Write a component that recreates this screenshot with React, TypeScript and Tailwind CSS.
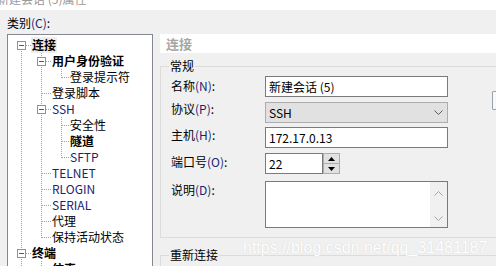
import React from "react";

type Kind = "pipe" | "tee" | "corner" | "first";

const DOT = "#a0a0a0";

function TreeCell({ kind, box }: { kind: Kind; box?: boolean }) {
  return (
    <svg width="20" height="16" className="block shrink-0">
      {(kind === "pipe" || kind === "tee") && (
        <line x1="10.5" y1="0" x2="10.5" y2="16" stroke={DOT} strokeDasharray="1 1" />
      )}
      {kind === "corner" && (
        <line x1="10.5" y1="0" x2="10.5" y2="9" stroke={DOT} strokeDasharray="1 1" />
      )}
      {kind === "first" && (
        <line x1="10.5" y1="8" x2="10.5" y2="16" stroke={DOT} strokeDasharray="1 1" />
      )}
      {kind !== "pipe" && (
        <line x1="11" y1="8.5" x2="20" y2="8.5" stroke={DOT} strokeDasharray="1 1" />
      )}
      {box && (
        <>
          <rect x="6.5" y="4.5" width="8" height="8" fill="#ffffff" stroke="#919191" />
          <line x1="8" y1="8.5" x2="13" y2="8.5" stroke="#3d5aa6" />
        </>
      )}
    </svg>
  );
}

type Row = {
  cells: Kind[];
  box?: boolean;
  label: string;
  bold?: boolean;
  sel?: boolean;
  latin?: boolean;
};

const rows: Row[] = [
  { cells: ["first"], box: true, label: "连接", bold: true, sel: true },
  { cells: ["pipe", "tee"], box: true, label: "用户身份验证", bold: true },
  { cells: ["pipe", "pipe", "corner"], label: "登录提示符" },
  { cells: ["pipe", "tee"], label: "登录脚本" },
  { cells: ["pipe", "tee"], box: true, label: "SSH", latin: true },
  { cells: ["pipe", "pipe", "tee"], label: "安全性" },
  { cells: ["pipe", "pipe", "tee"], label: "隧道", bold: true },
  { cells: ["pipe", "pipe", "corner"], label: "SFTP", latin: true },
  { cells: ["pipe", "tee"], label: "TELNET", latin: true },
  { cells: ["pipe", "tee"], label: "RLOGIN", latin: true },
  { cells: ["pipe", "tee"], label: "SERIAL", latin: true },
  { cells: ["pipe", "tee"], label: "代理" },
  { cells: ["pipe", "corner"], label: "保持活动状态" },
  { cells: ["tee"], box: true, label: "终端", bold: true },
  { cells: ["pipe", "tee"], label: "仿真", bold: true },
];

function Chevron({ up }: { up?: boolean }) {
  return (
    <svg width="9" height="5" className="block">
      <polyline
        points={up ? "0.5,4.5 4.5,0.5 8.5,4.5" : "0.5,0.5 4.5,4.5 8.5,0.5"}
        fill="none"
        stroke="#a6a6a6"
        strokeWidth="1"
      />
    </svg>
  );
}

function Tri({ up }: { up?: boolean }) {
  return (
    <svg width="7" height="4" className="block">
      <polygon points={up ? "0,4 3.5,0 7,4" : "0,0 3.5,4 7,0"} fill="#000" />
    </svg>
  );
}

function Key({ k }: { k: string }) {
  return <span className="text-[#1c2470]">({k})</span>;
}

export default function App() {
  return (
    <div className="relative w-[496px] h-[266px] overflow-hidden bg-[#f0f0f0] text-[12px] text-black font-['Noto_Sans_CJK_SC',sans-serif]">
      <div className="h-[10px] bg-white overflow-hidden">
        <div className="-mt-[9px] -ml-[3px] leading-[16px] text-[#9a9a9a] whitespace-nowrap">
          新建会话 (5)属性
        </div>
      </div>
      <div className="h-[24px] pl-[7px] pt-[2px] leading-[22px]">
        类别<Key k="C" />:
      </div>
      <div className="flex items-start">
        <div className="ml-[7px] w-[146px] h-[240px] shrink-0 border border-[#828790] bg-white pt-[2px] pl-[3px] overflow-hidden">
          {rows.map((r, i) => (
            <div key={i} className="flex h-[16px] items-center">
              {r.cells.map((c, j) => (
                <TreeCell key={j} kind={c} box={r.box && j === r.cells.length - 1} />
              ))}
              <span
                className={[
                  "px-[1px] leading-[16px] whitespace-nowrap",
                  r.cells.length === 3 ? "-ml-[2px]" : "",
                  r.bold ? "font-bold" : "",
                  r.sel ? "bg-[#ededed]" : "",
                  r.latin ? "text-[#1c2470]" : "",
                ].join(" ")}
              >
                {r.label}
              </span>
            </div>
          ))}
        </div>
        <div className="ml-[7px] flex-1 min-w-0">
          <div className="h-[19px] bg-white pl-[6px] leading-[19px] text-[13px] font-bold text-[#a5a5a5]">
            连接
          </div>
          <fieldset className="mt-[6px] border border-r-0 border-[#dcdcdc]">
            <legend className="ml-[8px] px-[1px] leading-[14px]">常规</legend>
            <div className="pl-[10px] pt-[3px] pb-[9px] flex flex-col">
              <div className="flex items-start">
                <div className="w-[94px] pt-[2px] leading-[16px]">
                  名称<Key k="N" />:
                </div>
                <div className="w-[183px] h-[21px] border border-[#7a7a7a] bg-white pl-[3px] leading-[19px] whitespace-nowrap">
                  新建会话 (5)
                </div>
              </div>
              <div className="flex items-start mt-[5px]">
                <div className="w-[94px] -mt-[1px] leading-[16px]">
                  协议<Key k="P" />:
                </div>
                <div className="w-[183px] h-[21px] border border-[#adadad] bg-[#e1e1e1] pl-[3px] pr-[4px] flex items-center justify-between">
                  <span className="leading-[19px]">SSH</span>
                  <svg width="9" height="5" className="block">
                    <polyline points="0.5,0.5 4.5,4.5 8.5,0.5" fill="none" stroke="#5a5a5a" />
                  </svg>
                </div>
              </div>
              <div className="flex items-start mt-[4px]">
                <div className="w-[94px] leading-[16px]">
                  主机<Key k="H" />:
                </div>
                <div className="w-[183px] h-[21px] border border-[#7a7a7a] bg-white pl-[3px] leading-[19px]">
                  172.17.0.13
                </div>
              </div>
              <div className="flex items-start mt-[5px]">
                <div className="w-[94px] pt-[1px] leading-[16px]">
                  端口号<Key k="O" />:
                </div>
                <div className="w-[58px] h-[21px] border border-[#7a7a7a] bg-white pl-[3px] leading-[19px]">
                  22
                </div>
                <div className="w-[17px] h-[21px] flex flex-col">
                  <div className="flex-1 border border-[#adadad] bg-[#e1e1e1] flex items-center justify-center">
                    <Tri up />
                  </div>
                  <div className="flex-1 border border-t-0 border-[#adadad] bg-[#e1e1e1] flex items-center justify-center">
                    <Tri />
                  </div>
                </div>
              </div>
              <div className="flex items-start mt-[7px]">
                <div className="w-[94px] pt-[1px] leading-[16px]">
                  说明<Key k="D" />:
                </div>
                <div className="w-[183px] h-[47px] border border-[#7a7a7a] bg-white flex justify-end">
                  <div className="w-[17px] h-full bg-[#f0f0f0] flex flex-col items-center justify-between pt-[9px] pb-[6px]">
                    <Chevron up />
                    <Chevron />
                  </div>
                </div>
              </div>
            </div>
          </fieldset>
          <fieldset className="mt-[10px] h-[40px] border border-r-0 border-[#dcdcdc]">
            <legend className="ml-[8px] px-[1px] leading-[14px]">重新连接</legend>
          </fieldset>
        </div>
      </div>
      <div className="absolute left-[492px] top-[91px] w-[8px] h-[19px] border border-[#9aa3ad] bg-[#f7f7f7] rounded-[1px]" />
      <div className="absolute left-[243px] top-[239px] leading-[18px] text-[16px] font-['Liberation_Sans',sans-serif] text-white whitespace-nowrap [text-shadow:0_0_1px_rgba(160,160,160,0.45)]">
        https://blog.csdn.net/qq_31481187
      </div>
    </div>
  );
}
